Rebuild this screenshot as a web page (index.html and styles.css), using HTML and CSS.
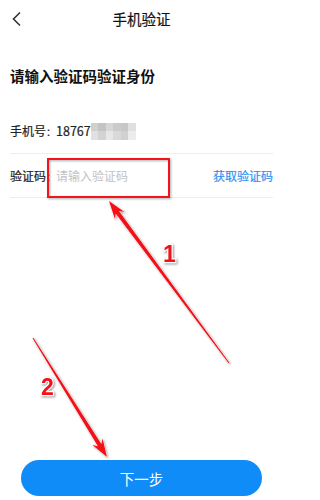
FILE: index.html
```html
<!DOCTYPE html>
<html lang="zh-CN">
<head>
<meta charset="utf-8">
<title>手机验证</title>
<link rel="stylesheet" href="styles.css">
</head>
<body>
<div class="page">
  <header class="topbar">
    <svg class="back" width="10" height="16" viewBox="0 0 10 16"><path d="M8 1.5 L1.5 8 L8 14.5" fill="none" stroke="#333" stroke-width="1.6"/></svg>
    <h1 class="title">手机验证</h1>
  </header>
  <h2 class="heading">请输入验证码验证身份</h2>
  <div class="row phone-row">
    <span class="label">手机号<span class="colon">：</span></span><span class="num">18767</span><span class="mosaic"><i style="background:#d0d0d0"></i><i style="background:#c4c4c4"></i><i style="background:#d7d7d7"></i><i style="background:#cbcbcb"></i><i style="background:#c7c7c7"></i><i style="background:#e0e0e0"></i><i style="background:#e1e1e1"></i><i style="background:#d3d3d3"></i><i style="background:#e7e7e7"></i><i style="background:#d9d9d9"></i><i style="background:#d1d1d1"></i><i style="background:#ececec"></i></span>
  </div>
  <div class="row code-row">
    <span class="label">验证码<span class="colon">：</span></span><span class="placeholder">请输入验证码</span><span class="get-code">获取验证码</span>
  </div>
  <button class="next">下一步</button>
</div>
<svg class="marks" width="281" height="500" viewBox="0 0 281 500">
  <rect class="mark-box" x="48" y="159" width="121" height="38"/>
  <polygon class="mark-arrow" points="109,201 124.53,211.88 118.94,211.05 229.40,362.70 228.60,363.30 115.72,213.43 114.89,219.02"/>
  <polygon class="mark-arrow" points="107,457 102.59,438.55 101.31,444.05 33.42,337.74 32.58,338.26 97.91,446.17 92.41,444.89"/>
  <text class="mark-num" x="163" y="262">1</text>
  <text class="mark-num" x="41" y="395">2</text>
</svg>
</body>
</html>
```
FILE: styles.css
```css
html, body {
  margin: 0;
  padding: 0;
  background: #fff;
}
body {
  font-family: "Noto Sans CJK SC", "Noto Sans", sans-serif;
  color: #222;
  width: 281px;
  height: 500px;
  overflow: hidden;
  position: relative;
}
.page {
  display: flex;
  flex-direction: column;
  height: 500px;
  box-sizing: border-box;
  padding: 0 8px 4px 10px;
}
.topbar {
  height: 38px;
  display: flex;
  align-items: center;
  justify-content: center;
  position: relative;
}
.back {
  position: absolute;
  left: 2px;
  top: 11px;
}
.title {
  margin: 0;
  font-size: 14.5px;
  font-weight: 400;
  line-height: 20px;
  color: #111;
  -webkit-text-stroke: 0.2px #111;
}
.heading {
  margin: 28px 0 0 0;
  font-size: 14.5px;
  font-weight: 700;
  line-height: 20px;
  color: #111;
}
.row {
  display: flex;
  align-items: center;
  border-bottom: 1px solid #eeeeee;
  font-size: 12px;
  color: #222;
  white-space: nowrap;
}
.row > span {
  flex-shrink: 0;
}
.label {
  -webkit-text-stroke: 0.2px #222;
}
.colon {
  font-size: 10px;
}
.phone-row {
  margin-top: 22px;
  height: 45px;
}
.code-row {
  height: 43px;
}
.num {
  font-size: 12.5px;
  -webkit-text-stroke: 0.2px #222;
}
.mosaic {
  display: grid;
  grid-template-columns: repeat(6, 7.5px);
  grid-template-rows: repeat(2, 8.5px);
  margin-top: 1px;
}
.mosaic i {
  display: block;
}
.placeholder {
  color: #c2c2c2;
}
.get-code {
  margin-left: auto;
  color: #2a8ff0;
  -webkit-text-stroke: 0.15px #2a8ff0;
}
.next {
  margin: auto 11px 0 11px;
  height: 36px;
  border: none;
  border-radius: 18px;
  background: #0f8cf8;
  color: #fff;
  font-family: "Noto Sans CJK SC", sans-serif;
  font-size: 14.5px;
  padding: 0;
}
.marks {
  position: absolute;
  left: 0;
  top: 0;
  pointer-events: none;
}
.mark-box {
  fill: none;
  stroke: #f2131b;
  stroke-width: 2;
  filter: drop-shadow(1px 1.5px 1px rgba(0, 0, 0, 0.35));
}
.mark-arrow {
  fill: #f50f16;
  stroke: #ffffff;
  stroke-width: 0.8;
  paint-order: stroke;
  filter: drop-shadow(1.5px 1.5px 1px rgba(0, 0, 0, 0.35));
}
.mark-num {
  font-family: "Liberation Sans", Arial, sans-serif;
  font-weight: 700;
  font-size: 23px;
  fill: #f0131a;
  stroke: #ffffff;
  stroke-width: 2.5;
  paint-order: stroke;
  filter: drop-shadow(1.5px 1.5px 1px rgba(0, 0, 0, 0.4));
}
```
